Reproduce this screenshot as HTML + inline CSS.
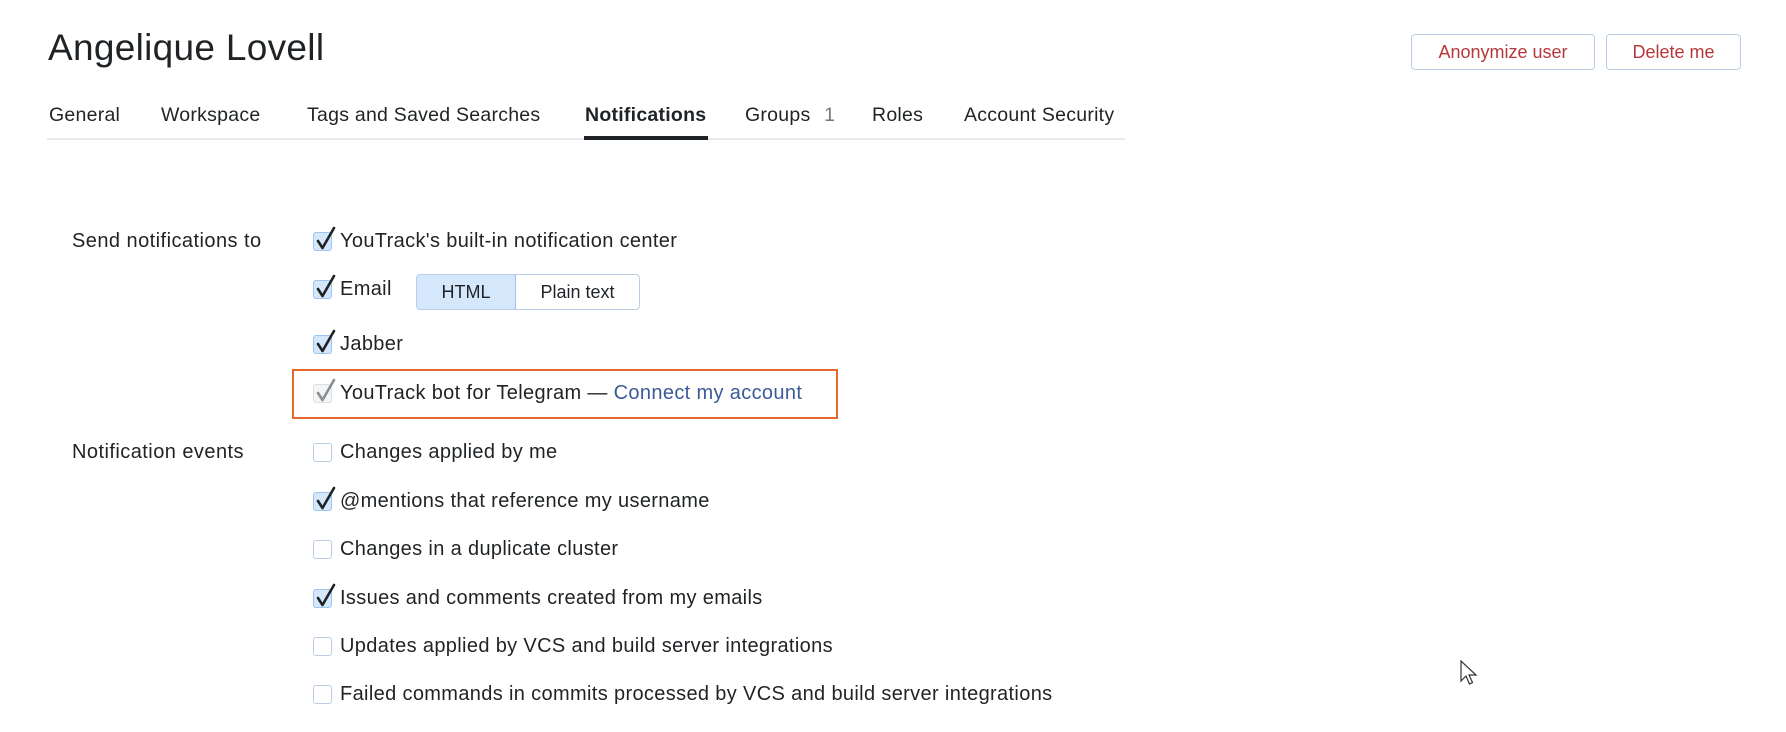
<!DOCTYPE html>
<html><head><meta charset="utf-8"><style>
body{margin:0;width:1786px;height:732px;background:#fff;font-family:"Liberation Sans",sans-serif;color:#1f2326;position:relative;overflow:hidden}
.a{position:absolute;white-space:nowrap}
h1{position:absolute;left:48px;top:27px;margin:0;font-weight:normal;font-size:37px;color:#1f2326;letter-spacing:0.3px}
.btn{position:absolute;top:34px;height:34px;border:1px solid #b9cde4;border-radius:4px;color:#b7383a;font-size:18px;line-height:34px;text-align:center;box-sizing:content-box}
.tab{position:absolute;top:104px;font-size:19.5px;color:#1f2326;letter-spacing:0.25px}
.cb{position:absolute;left:313px;width:19px;height:19px;border:1px solid #b9cde4;border-radius:3px;box-sizing:border-box;background:#fff}
.cb.on{background:#d5e8fb;border-color:#9cc4ee}
.cb svg{position:absolute;left:0;top:-7px}
.t{position:absolute;left:340px;font-size:20px;letter-spacing:0.35px}
.lbl{position:absolute;left:72px;font-size:20px;letter-spacing:0.45px}
</style></head><body>
<h1>Angelique Lovell</h1>
<div class="btn" style="left:1411px;width:182px">Anonymize user</div>
<div class="btn" style="left:1606px;width:133px">Delete me</div>

<div class="tab" style="left:49px">General</div>
<div class="tab" style="left:161px">Workspace</div>
<div class="tab" style="left:307px">Tags and Saved Searches</div>
<div class="tab" style="left:585px;font-weight:bold">Notifications</div>
<div class="tab" style="left:745px">Groups <span style="color:#777;margin-left:8px">1</span></div>
<div class="tab" style="left:872px">Roles</div>
<div class="tab" style="left:964px">Account Security</div>
<div class="a" style="left:47px;top:138px;width:1078px;height:2px;background:#e6e9ee"></div>
<div class="a" style="left:584px;top:136px;width:124px;height:4px;background:#1f2326"></div>

<div class="lbl" style="top:230px">Send notifications to</div>
<div class="lbl" style="top:441px">Notification events</div>

<div class="a" style="left:292px;top:369px;width:542px;height:46px;border:2px solid #e2692c"></div>

<div class="a" style="left:416px;top:274px;width:222px;height:34px;border:1px solid #b9cde4;border-radius:4px;overflow:hidden;font-size:18px;line-height:34px">
<div class="a" style="left:0;top:0;width:98px;height:34px;background:#d5e8fb;border-right:1px solid #9cc4ee;text-align:center">HTML</div>
<div class="a" style="left:99px;top:0;width:123px;text-align:center">Plain text</div>
</div>

<div id="rows"></div>
<script>
var rows=[[242,1,"YouTrack's built-in notification center"],[290,1,"Email"],[345,1,"Jabber"],[394,2,"YouTrack bot for Telegram — <span style='color:#3b5b96'>Connect my account</span>"],[453,0,"Changes applied by me"],[502,1,"@mentions that reference my username"],[550,0,"Changes in a duplicate cluster"],[599,1,"Issues and comments created from my emails"],[647,0,"Updates applied by VCS and build server integrations"],[695,0,"Failed commands in commits processed by VCS and build server integrations"]];
var h="";rows.forEach(function(r){var y=r[0];var c=r[1]==1?"#1f2326":"#8a8d91";
h+='<div class="cb'+(r[1]==1?' on':'')+'" style="top:'+(y-10)+'px;'+(r[1]==2?'background:#f4f5f6;border-color:#dde1e6':'')+'">'+(r[1]?'<svg width="24" height="26" viewBox="0 0 24 26"><path d="M4 15 L8.5 22 L20 2" fill="none" stroke="'+c+'" stroke-width="2.6" stroke-linecap="round" stroke-linejoin="round"/></svg>':'')+'</div>';
h+='<div class="t" style="top:'+(y-12)+'px">'+r[2]+'</div>';});
document.getElementById("rows").innerHTML=h;
</script>
<svg class="a" style="left:1460px;top:660px" width="20" height="28" viewBox="0 0 20 28"><path d="M1 1 L1 21 L6 16 L9.5 24 L12.5 22.5 L9 15 L16 15 Z" fill="#fff" stroke="#333" stroke-width="1.2"/></svg>
</body></html>
